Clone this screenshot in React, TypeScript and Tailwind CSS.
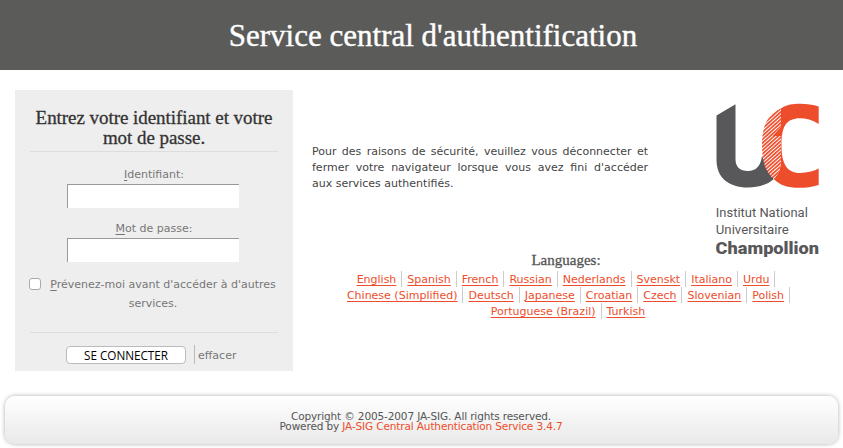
const languageRows = [
  { shift: 'mr-[14px]', names: ['English', 'Spanish', 'French', 'Russian', 'Nederlands', 'Svenskt', 'Italiano', 'Urdu'] },
  { shift: 'mr-[9px]', names: ['Chinese (Simplified)', 'Deutsch', 'Japanese', 'Croatian', 'Czech', 'Slovenian', 'Polish'] },
  { shift: 'mr-[10px]', names: ['Portuguese (Brazil)', 'Turkish'] },
];

function Logo() {
  return (
    <svg width="110" height="160" viewBox="712 100 110 160" className="block" role="img" aria-label="Institut National Universitaire Champollion">
      <defs>
        <pattern id="hatch" width="2.7" height="2.7" patternUnits="userSpaceOnUse" patternTransform="rotate(-42)">
          <rect width="2.7" height="2.7" fill="#fff" />
          <rect width="2.7" height="1.7" fill="#ee4d2b" />
        </pattern>
      </defs>
      <path d="M716.5 115.5 L735.5 104.3 V159 Q735.5 171 748 171 Q760 171 762 156 L774 179 C767 185 758 187.5 748 187.5 C728 187.5 716.5 177 716.5 160 Z" fill="#58585a" />
      <path d="M781 108.5 C787 104.5 793 103.8 800 103.8 C807 103.8 813 104.8 818.7 106.6 V124 C812 120 806 118.3 800 118.3 C786 118.3 781.5 127 781.5 145 C781.5 164 787 173 800 173 C807 173 813 171.5 818.7 168.6 V185 C812 187 806 187.8 799 187.8 C788 187.8 780 185.5 773.8 179 C778 174.5 781 169 781 161 V136 H772.5 L781 127 Z" fill="#ee4d2b" />
      <path d="M781 108.5 C768 113 762 126 762 144 C762 161 765 171 773.8 179 C779 173.5 781 168 781 160 V136 H772.5 L781 127 Z" fill="url(#hatch)" />
      <g fill="#58585a" fontFamily="Roboto, sans-serif">
        <text x="715.8" y="216.5" fontSize="13.6" textLength="92" lengthAdjust="spacingAndGlyphs">Institut National</text>
        <text x="715.8" y="234.2" fontSize="13.6" textLength="73" lengthAdjust="spacingAndGlyphs">Universitaire</text>
        <text x="715.6" y="253.8" fontSize="17" fontWeight="900" textLength="103.5" lengthAdjust="spacingAndGlyphs">Champollion</text>
      </g>
    </svg>
  );
}

function Field({ id, accessKey, label, type }: { id: string; accessKey: string; label: string; type: string }) {
  return (
    <div className="flex flex-col items-center">
      <label htmlFor={id} className="h-5 leading-[22px]">
        <span className="underline underline-offset-2">{accessKey}</span>{label}
      </label>
      <input id={id} type={type} className="mr-[2px] block h-6 w-[172px] rounded-none border-t border-l border-[#999] bg-white px-1 outline-none" />
    </div>
  );
}

export default function App() {
  return (
    <div className="h-[448px] overflow-hidden bg-white font-['Verdana','DejaVu_Sans',sans-serif] text-[11px] text-[#555]">
      <header className="h-[70px] bg-[#5b5b59] pt-[18px] pl-[23px]">
        <h1 className="text-center font-['Georgia','Liberation_Serif',serif] text-[31px] leading-9 text-white [-webkit-text-stroke:0.4px_white]">
          Service central d'authentification
        </h1>
      </header>
      <main className="flex h-[326px] pt-5 pl-[15px]">
        <form className="h-[281px] w-[278px] shrink-0 bg-[#eee] px-[15px] pt-[18px] text-[#777]">
          <h2 className="h-[44px] border-b border-[#ddd] text-center font-['Georgia','Liberation_Serif',serif] text-[19px] leading-5 tracking-[-0.05px] text-[#333] [-webkit-text-stroke:0.3px_#333]">
            <span className="whitespace-nowrap">Entrez votre identifiant et votre</span>
            <br />
            mot de passe.
          </h2>
          <div className="flex flex-col gap-[10px] pt-3">
            <Field id="username" accessKey="I" label="dentifiant:" type="text" />
            <Field id="password" accessKey="M" label="ot de passe:" type="password" />
          </div>
          <div className="-ml-px flex pt-[12px]">
            <input id="warn" type="checkbox" className="mt-1 h-3 w-3 shrink-0 appearance-none rounded-[3px] border border-[#aaa] bg-white" />
            <label htmlFor="warn" className="ml-[9px] h-[38px] w-[226px] pt-px text-center leading-[19px] whitespace-nowrap">
              <span className="underline underline-offset-2">P</span>révenez-moi avant d'accéder à d'autres
              <br />
              <span className="pr-[20px]">services.</span>
            </label>
          </div>
          <div className="mt-[20px] flex border-t border-[#ddd] pt-3 pl-9">
            <button type="button" className="mt-px h-[18px] w-[120px] rounded-[4px] border border-[#bbb] bg-white font-['Open_Sans','Noto_Sans',sans-serif] text-[11.7px] leading-4 text-black">
              SE CONNECTER
            </button>
            <button type="reset" className="ml-2 h-[19px] border-l border-[#bbb] pl-[3px] leading-[21px]">
              effacer
            </button>
          </div>
        </form>
        <section className="ml-[19px] w-[517px] pt-[54px]">
          <div className="flex h-[116px]">
            <div className="w-[336px] leading-4 text-[#444]">
              <p className="[text-align-last:justify]">Pour des raisons de sécurité, veuillez vous déconnecter et</p>
              <p className="[text-align-last:justify]">fermer votre navigateur lorsque vous avez fini d'accéder</p>
              <p>aux services authentifiés.</p>
            </div>
            <div className="-mt-[44px] ml-[64px]">
              <Logo />
            </div>
          </div>
          <div className="-mt-[10px] flex flex-col items-center">
            <h3 className="-ml-[9px] h-[21px] w-[200px] text-center font-['Georgia','Liberation_Serif',serif] text-[15px] leading-5 text-[#555] [-webkit-text-stroke:0.3px_#555]">
              Languages:
            </h3>
            {languageRows.map(({ shift, names }, rowIndex) => (
              <ul key={names[0]} className={`flex h-4 leading-[17px] whitespace-nowrap ${shift}`}>
                {names.map((name, index) => (
                  <li key={name} className={rowIndex === 2 && index === 1 ? 'pl-[5px]' : 'border-r border-[#ccc] px-[5px]'}>
                    <a href="#" className="text-[#ee4d2b] underline underline-offset-2">{name}</a>
                  </li>
                ))}
              </ul>
            ))}
          </div>
        </section>
      </main>
      <footer className="mr-[5px] ml-[5px] h-[48px] rounded-[10px] bg-linear-to-b from-white to-[#e9e9e9] pt-[15px] pr-px text-center text-[10.5px] leading-[10px] tracking-[-0.13px] shadow-[0_0_4px_#aaa]">
        <p>Copyright © 2005-2007 JA-SIG. All rights reserved.</p>
        <p>
          Powered by <a href="#" className="text-[#ee4d2b]">JA-SIG Central Authentication Service 3.4.7</a>
        </p>
      </footer>
    </div>
  );
}
